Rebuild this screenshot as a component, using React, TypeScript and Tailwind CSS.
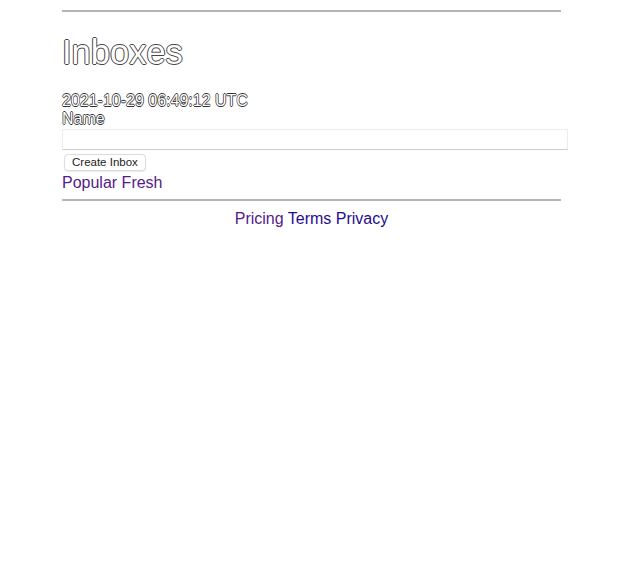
import React from "react";

export default function App() {
  return (
    <div className="min-h-[574px] w-[618px] bg-white font-['Liberation_Sans',Arial,sans-serif] text-black">
      <div className="ml-[62px] w-[499px] pt-[10px]">
        <div className="h-[2px] bg-[#b5b5b5]" />
        <h1 className="mt-[20px] text-[34.5px] leading-[40px] text-white [text-shadow:1px_0_0_#444,-1px_0_0_#444,0_1px_0_#444,0_-1px_0_#444]">
          Inboxes
        </h1>
        <div className="mt-[20px] text-[16px] leading-[18px] text-white [text-shadow:0.7px_0_0_#333,-0.7px_0_0_#333,0_0.7px_0_#333,0_-0.7px_0_#333]">
          2021-10-29 06:49:12 UTC
        </div>
        <div className="text-[16px] leading-[18px] text-white [text-shadow:0.7px_0_0_#333,-0.7px_0_0_#333,0_0.7px_0_#333,0_-0.7px_0_#333]">
          Name
        </div>
        <div className="mt-[1px] h-[21px] w-[506px] border border-[#ececec] border-b-[#cfcfcf] bg-white" />
        <div className="mt-[4px] flex">
          <button className="ml-[2px] h-[17px] rounded-[4px] border border-[#dcdcdc] bg-white px-[7px] text-[11.5px] leading-[15px] text-[#222] shadow-[0_0.5px_1px_rgba(0,0,0,0.08)]">
            Create Inbox
          </button>
        </div>
        <div className="mt-[2px] text-[16px] leading-[20px] text-[#551a8b]">
          <a>Popular</a> <a>Fresh</a>
        </div>
        <div className="mt-[6px] h-[2px] bg-[#b5b5b5]" />
        <div className="mt-[8px] text-center text-[16px] leading-[20px]">
          <a className="text-[#551a8b]">Pricing</a>{" "}
          <a className="text-[#1f0c8f]">Terms</a>{" "}
          <a className="text-[#1f0c8f]">Privacy</a>
        </div>
      </div>
    </div>
  );
}
